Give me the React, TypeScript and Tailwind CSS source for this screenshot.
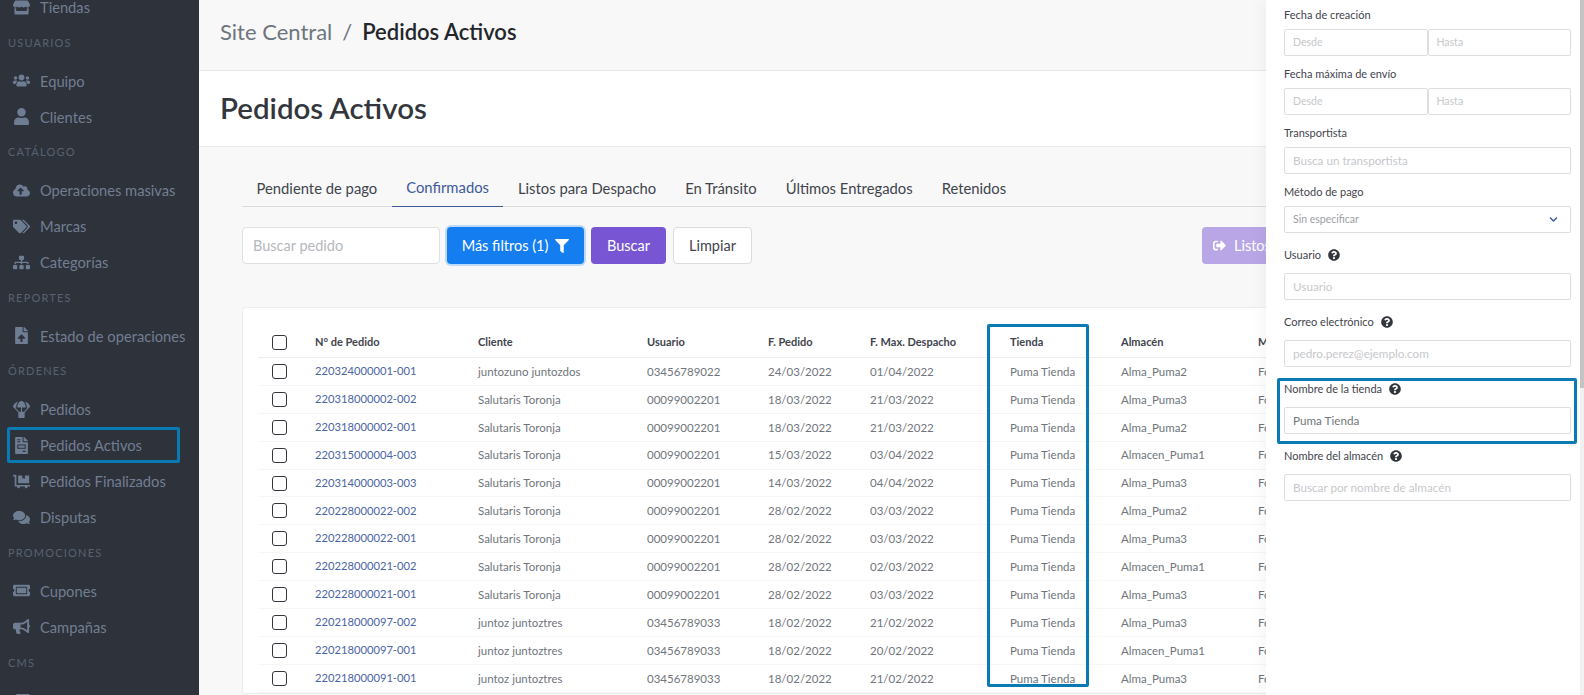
import type { ReactNode } from 'react';
import type { IconType } from 'react-icons';
import {
  FaBullhorn,
  FaChevronDown,
  FaCloudUploadAlt,
  FaComments,
  FaDollyFlatbed,
  FaFileInvoice,
  FaFileUpload,
  FaFilter,
  FaImages,
  FaParachuteBox,
  FaQuestionCircle,
  FaSignOutAlt,
  FaSitemap,
  FaStore,
  FaTags,
  FaTicketAlt,
  FaUser,
  FaUsers,
} from 'react-icons/fa';

type NavEntry = { section: string } | { label: string; icon: IconType; marked?: boolean };

const nav: NavEntry[] = [
  { label: 'Tiendas', icon: FaStore },
  { section: 'USUARIOS' },
  { label: 'Equipo', icon: FaUsers },
  { label: 'Clientes', icon: FaUser },
  { section: 'CATÁLOGO' },
  { label: 'Operaciones masivas', icon: FaCloudUploadAlt },
  { label: 'Marcas', icon: FaTags },
  { label: 'Categorías', icon: FaSitemap },
  { section: 'REPORTES' },
  { label: 'Estado de operaciones', icon: FaFileUpload },
  { section: 'ÓRDENES' },
  { label: 'Pedidos', icon: FaParachuteBox },
  { label: 'Pedidos Activos', icon: FaFileInvoice, marked: true },
  { label: 'Pedidos Finalizados', icon: FaDollyFlatbed },
  { label: 'Disputas', icon: FaComments },
  { section: 'PROMOCIONES' },
  { label: 'Cupones', icon: FaTicketAlt },
  { label: 'Campañas', icon: FaBullhorn },
  { section: 'CMS' },
  { label: '', icon: FaImages },
];

const tabs = ['Pendiente de pago', 'Confirmados', 'Listos para Despacho', 'En Tránsito', 'Últimos Entregados', 'Retenidos'];

const ST = 'Salutaris Toronja';
const JT = 'juntoz juntoztres';
const rows = [
  ['220324000001-001', 'juntozuno juntozdos', '03456789022', '24/03/2022', '01/04/2022', 'Alma_Puma2'],
  ['220318000002-002', ST, '00099002201', '18/03/2022', '21/03/2022', 'Alma_Puma3'],
  ['220318000002-001', ST, '00099002201', '18/03/2022', '21/03/2022', 'Alma_Puma2'],
  ['220315000004-003', ST, '00099002201', '15/03/2022', '03/04/2022', 'Almacen_Puma1'],
  ['220314000003-003', ST, '00099002201', '14/03/2022', '04/04/2022', 'Alma_Puma3'],
  ['220228000022-002', ST, '00099002201', '28/02/2022', '03/03/2022', 'Alma_Puma2'],
  ['220228000022-001', ST, '00099002201', '28/02/2022', '03/03/2022', 'Alma_Puma3'],
  ['220228000021-002', ST, '00099002201', '28/02/2022', '02/03/2022', 'Almacen_Puma1'],
  ['220228000021-001', ST, '00099002201', '28/02/2022', '03/03/2022', 'Alma_Puma3'],
  ['220218000097-002', JT, '03456789033', '18/02/2022', '21/02/2022', 'Alma_Puma3'],
  ['220218000097-001', JT, '03456789033', '18/02/2022', '20/02/2022', 'Almacen_Puma1'],
  ['220218000091-001', JT, '03456789033', '18/02/2022', '21/02/2022', 'Alma_Puma3'],
];

const gridCols = 'grid grid-cols-[57px_163px_169px_121px_102px_140px_111px_137px_120px] items-center';

function Sidebar() {
  return (
    <aside className="w-[199px] shrink-0 overflow-hidden bg-[#2d323b]">
      <div className="-mt-[11px]">
        {nav.map((item, i) =>
          'section' in item ? (
            <div key={item.section} className="flex h-[37.6px] items-center pb-[2px] pl-2 text-[11px] tracking-[1.2px] text-[#596270]">
              {item.section}
            </div>
          ) : (
            <div key={i} className="relative flex h-9 items-center text-[14.7px] text-[#737e92]">
              <span className="flex w-[40px] shrink-0 justify-center pl-[3px]">
                <item.icon className="h-[17px] w-[17px] text-[#6f7d93]" />
              </span>
              {item.label}
              {item.marked && <div className="absolute left-[7px] top-0 h-9 w-[173px] rounded-[2px] border-[3px] border-[#0a7ab5]" />}
            </div>
          ),
        )}
      </div>
    </aside>
  );
}

function OrdersTable() {
  return (
    <div className="relative mt-[43px] w-[1100px] rounded-t border border-[#eeeeee] bg-white pl-[15px] pt-[20px]">
      <div className={`${gridCols} h-[30px] border-b border-[#eeeeee] text-[11px] font-bold text-[#3f444d]`}>
        <span className="pl-[14px]">
          <span className="block h-[15px] w-[15px] rounded-[3px] border border-[#33373d] bg-white" />
        </span>
        <span>N° de Pedido</span>
        <span>Cliente</span>
        <span>Usuario</span>
        <span>F. Pedido</span>
        <span>F. Max. Despacho</span>
        <span>Tienda</span>
        <span>Almacén</span>
        <span>Método</span>
      </div>
      {rows.map((row) => (
        <div key={row[0]} className={`${gridCols} h-[27.9px] border-b border-[#f6f6f6] text-[11.5px] text-[#70757c]`}>
          <span className="pl-[14px]">
            <span className="block h-[15px] w-[15px] rounded-[3px] border border-[#33373d] bg-white" />
          </span>
          <span className="text-[11.2px] text-[#4a64a5]">{row[0]}</span>
          <span>{row[1]}</span>
          <span>{row[2]}</span>
          <span>{row[3]}</span>
          <span>{row[4]}</span>
          <span>Puma Tienda</span>
          <span>{row[5]}</span>
          <span>Formulario</span>
        </div>
      ))}
      <div className="absolute left-[744px] top-[16px] h-[363px] w-[102px] rounded-[2px] border-[3px] border-[#0a7ab5]" />
    </div>
  );
}

function FieldLabel({ text, help }: { text: string; help?: boolean }) {
  return (
    <div
      className={
        help
          ? 'mb-2 mt-3 flex h-5 items-center gap-[7px] text-[11px] text-[#3f444d]'
          : 'mb-[6px] mt-[10px] flex h-4 items-center text-[11px] text-[#3f444d]'
      }
    >
      {text}
      {help && <FaQuestionCircle className="h-3 w-3 text-[#33373d]" />}
    </div>
  );
}

function TextBox({ children, dark, wide }: { children?: ReactNode; dark?: boolean; wide?: boolean }) {
  return (
    <div
      className={`flex h-[27px] flex-1 items-center rounded-[2px] border border-[#dedede] bg-white px-2 ${wide ? 'text-[11.7px]' : 'text-[10.5px]'} ${
        dark ? 'text-[#71767d]' : 'text-[#c6c8cc]'
      }`}
    >
      {children}
    </div>
  );
}

function FilterPanel() {
  return (
    <div className="absolute right-0 top-0 flex h-full">
      <div className="w-[314px] bg-white pl-[18px] pr-[9px] shadow-[-6px_0_12px_rgba(0,0,0,0.03)]">
        <div className="-mt-[3px]">
          <FieldLabel text="Fecha de creación" />
          <div className="flex">
            <TextBox>Desde</TextBox>
            <TextBox>Hasta</TextBox>
          </div>
          <FieldLabel text="Fecha máxima de envío" />
          <div className="flex">
            <TextBox>Desde</TextBox>
            <TextBox>Hasta</TextBox>
          </div>
          <FieldLabel text="Transportista" />
          <div className="flex">
            <TextBox wide>Busca un transportista</TextBox>
          </div>
          <FieldLabel text="Método de pago" />
          <div className="flex h-[27px] items-center justify-between rounded-[2px] border border-[#dedede] bg-white pl-2 pr-3 text-[10.5px] text-[#9a9ea4]">
            Sin especificar
            <FaChevronDown className="h-[9px] w-[9px] text-[#3c5a9a]" />
          </div>
          <FieldLabel text="Usuario" help />
          <div className="flex">
            <TextBox wide>Usuario</TextBox>
          </div>
          <FieldLabel text="Correo electrónico" help />
          <div className="flex">
            <TextBox wide>pedro.perez@ejemplo.com</TextBox>
          </div>
          <div className="relative">
            <FieldLabel text="Nombre de la tienda" help />
            <div className="flex">
              <TextBox dark wide>Puma Tienda</TextBox>
            </div>
            <div className="absolute -bottom-[10px] -left-[7px] -right-[6px] -top-[1px] rounded-[2px] border-[3px] border-[#0a7ab5]" />
          </div>
          <FieldLabel text="Nombre del almacén" help />
          <div className="flex">
            <TextBox wide>Buscar por nombre de almacén</TextBox>
          </div>
        </div>
      </div>
      <div className="flex w-1 flex-col bg-[#f1f1f1]">
        <div className="h-[388px] bg-[#c4c4c4]" />
      </div>
    </div>
  );
}

export default function App() {
  return (
    <div className="relative flex h-[695px] overflow-hidden bg-[#f8f8f8] font-['Lato',sans-serif]">
      <Sidebar />
      <main className="min-w-0 flex-1">
        <div className="flex h-[71px] items-center gap-[10px] border-b border-[#e6e6e6] pb-[8px] pl-[21px] text-[22px]">
          <span className="text-[#6f757e]">Site Central</span>
          <span className="text-[#6f757e]">/</span>
          <span className="font-semibold text-[#23262b]">Pedidos Activos</span>
        </div>
        <div className="flex h-[76px] items-center border-b border-[#ececec] bg-white pl-[21px]">
          <h1 className="text-[29.5px] font-semibold text-[#33373d]">Pedidos Activos</h1>
        </div>
        <div className="pl-[43px]">
          <div className="flex h-[60px] w-[1100px] items-end border-b border-[#dcdcdc]">
            {tabs.map((tab) => (
              <div
                key={tab}
                className={`-mb-px flex h-[38px] items-center px-[14.5px] text-[14.8px] ${
                  tab === 'Confirmados' ? 'border-b border-[#3c5a9a] text-[#3c5a9a]' : 'text-[#3f444d]'
                }`}
              >
                {tab}
              </div>
            ))}
          </div>
          <div className="mt-[20px] flex h-[37px] w-[1100px] gap-[7px] text-[14.5px]">
            <div className="flex w-[198px] shrink-0 items-center rounded border border-[#e0e0e0] bg-white px-[10px] text-[#b5b8bd]">Buscar pedido</div>
            <div className="flex w-[137px] shrink-0 items-center justify-center gap-[7px] rounded bg-[#147ef0] text-white ring-2 ring-[#147ef0]/25">
              Más filtros (1)
              <FaFilter className="h-[14px] w-[14px]" />
            </div>
            <div className="flex w-[75px] shrink-0 items-center justify-center rounded bg-[#7856d3] text-white">Buscar</div>
            <div className="flex w-[79px] shrink-0 items-center justify-center rounded border border-[#dcdcdc] bg-white text-[#3f444d]">Limpiar</div>
            <div className="ml-[443px] flex w-[190px] shrink-0 items-center gap-[8px] whitespace-nowrap rounded bg-[#b9a6e7] pl-[11px] text-white">
              <FaSignOutAlt className="h-[13px] w-[13px]" />
              Listos para Despacho
            </div>
          </div>
          <OrdersTable />
        </div>
      </main>
      <FilterPanel />
    </div>
  );
}
